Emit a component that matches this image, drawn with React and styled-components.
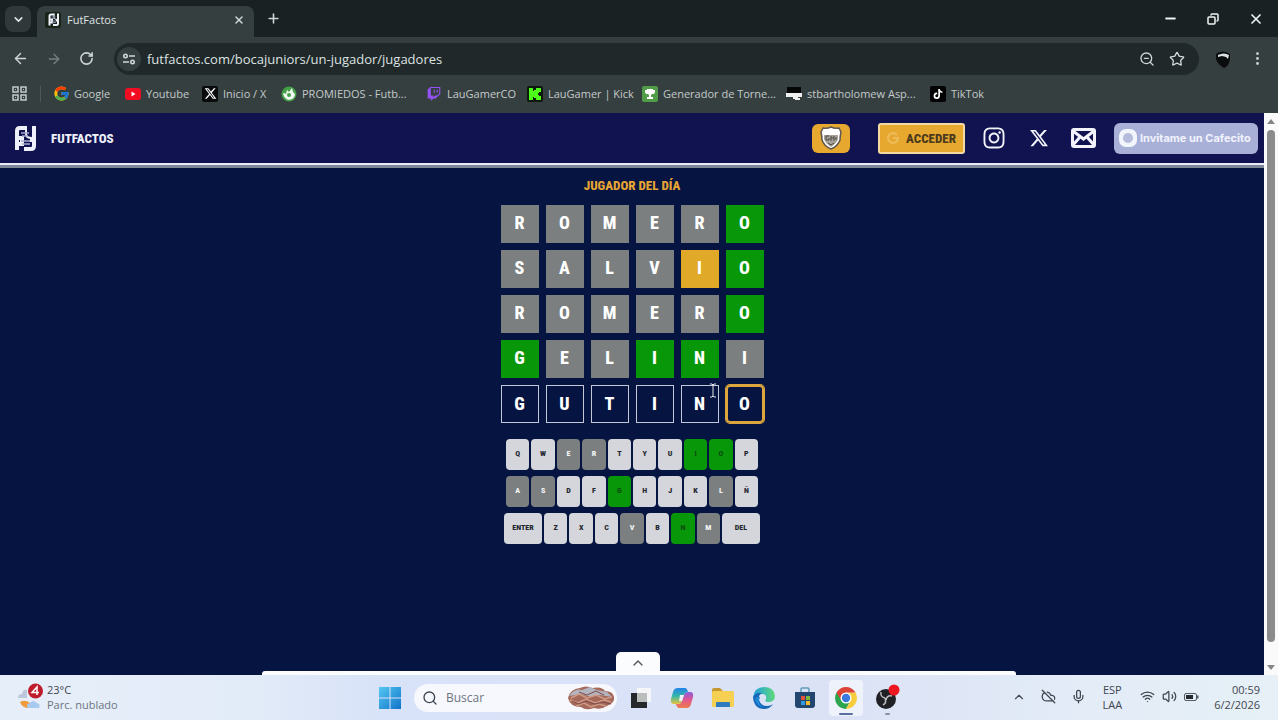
import { useState } from "react";
import styled, { createGlobalStyle, css } from "styled-components";
import {
  ArrowLeft,
  ArrowRight,
  ChevronDown,
  ChevronUp,
  CloudOff,
  Copy,
  EllipsisVertical,
  Mic,
  Minus,
  Plus,
  RotateCw,
  Search,
  Star,
  Volume2,
  Wifi,
  X,
  ZoomOut,
} from "lucide-react";
import { FcGoogle } from "react-icons/fc";
import { FaInstagram, FaTiktok, FaTwitch, FaXTwitter } from "react-icons/fa6";

const GlobalStyle = createGlobalStyle`
  * {
    box-sizing: border-box;
  }
  body {
    margin: 0;
    font-family: "Open Sans", "Noto Sans", sans-serif;
  }
  button, input {
    font-family: inherit;
    border: none;
    padding: 0;
    margin: 0;
    outline: none;
  }
  button {
    cursor: pointer;
    background: none;
    color: inherit;
  }
  a {
    color: inherit;
    text-decoration: none;
  }
  svg {
    display: block;
    flex-shrink: 0;
  }
`;

const condensed = css`
  font-family: "Roboto Condensed", "Liberation Sans Narrow", "Liberation Sans", sans-serif;
  font-weight: 800;
`;

const Screen = styled.div`
  min-height: 100vh;
  display: flex;
  flex-direction: column;
  background: #051440;
`;

/* browser */
const TitleBar = styled.div`
  height: 37px;
  display: flex;
  align-items: stretch;
  background: #1a2122;
  color: #dfe4e4;
`;
const TabSearch = styled.button`
  width: 26px;
  height: 26px;
  margin: 6px 6px 0 5px;
  display: flex;
  align-items: center;
  justify-content: center;
  border-radius: 8px;
  background: #30383a;
`;
const Tab = styled.div`
  width: 217px;
  margin-top: 6px;
  padding: 0 9px 4px 8px;
  display: flex;
  align-items: center;
  gap: 6px;
  border-radius: 8px 8px 0 0;
  background: #363f40;
  font-size: 11px;
`;
const TabName = styled.span`
  flex: 1;
`;
const IconButton = styled.button`
  display: flex;
  align-items: center;
  justify-content: center;
  color: ${(p) => p.$color || "#d0d6d6"};
`;
const NewTab = styled(IconButton)`
  width: 38px;
`;
const WindowButtons = styled.div`
  margin-left: auto;
  padding-right: 14px;
  display: flex;
  gap: 29px;
`;
const Toolbar = styled.div`
  height: 43px;
  padding: 0 12px;
  display: flex;
  align-items: center;
  gap: 17px;
  background: #363f40;
`;
const AddressBar = styled.div`
  flex: 1;
  height: 32px;
  margin-left: 3px;
  padding: 0 14px 0 3px;
  display: flex;
  align-items: center;
  gap: 6px;
  border-radius: 16px;
  background: #202829;
`;
const SiteInfo = styled(IconButton)`
  width: 24px;
  height: 24px;
  border-radius: 50%;
  background: #363f40;
`;
const UrlInput = styled.input`
  flex: 1;
  min-width: 0;
  background: none;
  color: #dde2e2;
  font-size: 13px;
`;
const UrlActions = styled.div`
  display: flex;
  gap: 14px;
`;
const ProfileButton = styled(IconButton)`
  margin-left: -2px;
`;
const Bookmarks = styled.nav`
  height: 33px;
  padding: 0 12px 6px;
  display: flex;
  align-items: center;
  background: #363f40;
  color: #c3caca;
  font-size: 11px;
`;
const Divider = styled.span`
  width: 1px;
  height: 16px;
  margin: 0 12px 0 13px;
  background: #4c5758;
`;
const Bookmark = styled.a`
  width: ${(p) => p.$width}px;
  display: flex;
  align-items: center;
  gap: 5px;
  white-space: nowrap;
`;
const Favicon = styled.span`
  width: 16px;
  height: 16px;
  display: flex;
  align-items: center;
  justify-content: center;
  flex-shrink: 0;
  border-radius: 2px;
  background: ${(p) => p.$bg || "none"};
  color: ${(p) => p.$color || "#fff"};
`;

/* page */
const Viewport = styled.div`
  flex: 1;
  position: relative;
  display: flex;
`;
const Page = styled.div`
  flex: 1;
  display: flex;
  flex-direction: column;
`;
const Scrollbar = styled.div`
  width: 14px;
  padding: 5px 0 4px;
  display: flex;
  flex-direction: column;
  align-items: center;
  gap: 5px;
  background: #fafafa;
`;
const ScrollThumb = styled.div`
  width: 8px;
  height: 512px;
  border-radius: 4px;
  background: #8b8b8b;
`;
const ScrollArrow = styled.button`
  &:last-child {
    margin-top: auto;
  }
`;
const Header = styled.header`
  height: 55px;
  padding: 0 6px 5px 12px;
  display: flex;
  align-items: center;
  background:
    linear-gradient(#e9ecf6, #e9ecf6) 0 50px / 100% 2px no-repeat,
    linear-gradient(#7d8796, #7d8796) 0 52px / 100% 3px no-repeat,
    #111350;
`;
const Brand = styled.a`
  ${condensed}
  display: flex;
  align-items: center;
  gap: 13px;
  color: #eef0fa;
  font-size: 13px;
`;
const HeaderActions = styled.div`
  margin-left: auto;
  display: flex;
  align-items: center;
`;
const ClubButton = styled.button`
  width: 38px;
  height: 29px;
  margin-right: 28px;
  display: flex;
  align-items: center;
  justify-content: center;
  border-radius: 6px;
  background: #e6a82f;
`;
const LoginButton = styled.button`
  ${condensed}
  width: 87px;
  height: 31px;
  display: flex;
  align-items: center;
  justify-content: center;
  gap: 7px;
  border: 2px solid #f3d9a2;
  border-radius: 3px;
  background: #e6a82f;
  color: #4b3a1c;
  font-size: 13px;
`;
const Social = styled.a`
  width: 45px;
  display: flex;
  justify-content: center;
  color: #f2f3fb;
`;
const Socials = styled.div`
  margin: 0 8px 0 6px;
  display: flex;
  align-items: center;
`;
const Cafecito = styled.a`
  width: 144px;
  height: 31px;
  padding-left: 4px;
  display: flex;
  align-items: center;
  gap: 2px;
  border-radius: 6px;
  background: #a9b0d8;
  color: #f1f3fc;
  font-family: Inter, sans-serif;
  font-size: 11px;
  font-weight: 700;
  white-space: nowrap;
`;
const Game = styled.main`
  flex: 1;
  padding-top: 7px;
  display: flex;
  flex-direction: column;
  align-items: center;
`;
const GameTitle = styled.h1`
  ${condensed}
  margin: 0 0 8px;
  color: #e6a534;
  font-size: 13px;
  line-height: 22px;
`;
const Board = styled.div`
  display: grid;
  gap: 7px;
`;
const BoardRow = styled.div`
  display: grid;
  grid-template-columns: repeat(6, 38px);
  gap: 7px;
`;
const tileColors = {
  miss: "#7b7f80",
  hit: "#089708",
  near: "#e0a927",
};
const tile = css`
  ${condensed}
  width: 38px;
  height: 38px;
  color: #fff;
  font-size: 18px;
  line-height: 36px;
  text-align: center;
`;
const Tile = styled.div`
  ${tile}
  background: ${(p) => tileColors[p.$state]};
`;
const TileSlot = styled.div`
  position: relative;
`;
const TileInput = styled.input`
  ${tile}
  display: block;
  padding-bottom: 2px;
  border: 1px solid #c3c8d6;
  background: none;
  line-height: 20px;
  ${(p) =>
    p.$active &&
    css`
      border: 2px solid #dda63c;
      border-radius: 4px;
      box-shadow: 0 0 0 1px #dda63c;
    `}
`;
const Pointer = styled.svg`
  position: absolute;
  right: 2px;
  top: -2px;
`;
const Keyboard = styled.div`
  margin-top: 16px;
  display: grid;
  justify-items: center;
  gap: 6px;
`;
const KeyRow = styled.div`
  width: ${(p) => (p.$wide ? 256 : 252)}px;
  display: flex;
  gap: 2px;
`;
const keyColors = {
  idle: ["#d4d6db", "#23262f"],
  miss: ["#7b7f80", "#f4f5f6"],
  hit: ["#089708", "#0b4d12"],
};
const Key = styled.button`
  ${condensed}
  flex: ${(p) => (p.$wide ? "0 0 38px" : "1")};
  height: 31px;
  padding-bottom: 2px;
  border-radius: 4px;
  background: ${(p) => keyColors[p.$state][0]};
  color: ${(p) => keyColors[p.$state][1]};
  font-size: 8px;
`;
const Drawer = styled.div`
  position: absolute;
  left: 0;
  right: 0;
  bottom: 0;
  display: flex;
  flex-direction: column;
  align-items: center;
`;
const DrawerToggle = styled.button`
  width: 44px;
  height: 19px;
  margin-right: 2px;
  padding-top: 3px;
  display: flex;
  align-items: center;
  justify-content: center;
  border-radius: 5px 5px 0 0;
  background: #fbfcfd;
  color: #555;
`;
const DrawerEdge = styled.div`
  width: 59%;
  height: 4px;
  border-radius: 3px 3px 0 0;
  background: #fbfcfd;
`;

/* taskbar */
const Taskbar = styled.footer`
  height: 45px;
  padding: 0 18px 0 17px;
  display: grid;
  grid-template-columns: 1fr auto 1fr;
  align-items: center;
  background: linear-gradient(90deg, #e6eff9 0%, #e2ebf8 20%, #d8e2f8 30%, #dbe2f6 65%, #e3ecf7 85%, #e6f0f6 100%);
  color: #3f4650;
  font-size: 11px;
  line-height: 15px;
`;
const Weather = styled.button`
  padding-bottom: 2px;
  display: flex;
  align-items: center;
  gap: 3px;
  text-align: left;
  font-size: 11px;
  line-height: 15px;
`;
const Muted = styled.div`
  color: #6d747e;
`;
const Apps = styled.div`
  display: flex;
  align-items: center;
  gap: 7px;
`;
const SearchBox = styled.label`
  width: 203px;
  height: 28px;
  padding: 0 2px 0 8px;
  display: flex;
  align-items: center;
  gap: 8px;
  border-radius: 14px;
  background: #f6f8fd;
`;
const SearchInput = styled.input`
  flex: 1;
  min-width: 0;
  background: none;
  font-size: 12px;
  &::placeholder {
    color: #6d747e;
    opacity: 1;
  }
`;
const AppButton = styled.button`
  width: 34px;
  height: 36px;
  display: flex;
  flex-direction: column;
  align-items: center;
  justify-content: center;
  position: relative;
  border-radius: 4px;
  background: ${(p) => (p.$open ? "#eef2fb" : "none")};
  &::after {
    content: "";
    display: ${(p) => (p.$mark ? "block" : "none")};
    position: absolute;
    bottom: 1px;
    width: ${(p) => p.$mark}px;
    height: 2px;
    border-radius: 1px;
    background: ${(p) => (p.$open ? "#5a6f9f" : "#8a909c")};
  }
`;
const Tray = styled.div`
  padding-bottom: 2px;
  display: flex;
  align-items: center;
  justify-content: flex-end;
  gap: 15px;
`;
const TrayGroup = styled.div`
  margin-left: 3px;
  display: flex;
  align-items: center;
  gap: 7px;
`;
const Language = styled.div`
  margin-left: 2px;
  text-align: center;
`;
const Clock = styled.div`
  text-align: right;
`;

const BrandMark = ({ size = 26 }) => (
  <svg width={size} height={size} viewBox="0 0 26 26" fill="none">
    <path d="M5 25V6q0-3 3-3h7M5 13h5v6H5" stroke="#eef0fa" strokeWidth="4" />
    <path d="M22 1v20q0 3-3 3h-7M22 15h-4" stroke="#eef0fa" strokeWidth="4" />
    <path d="M14 1v8q0 4 6 4" stroke="#eef0fa" strokeWidth="2" />
    <path d="M9 8h8M10 11h6M9 16h9M10 19h8" stroke="#a4a9cb" strokeWidth="1.500" />
  </svg>
);

const AppsIcon = () => (
  <svg width="15" height="15" viewBox="0 0 15 15" fill="none" stroke="#c3caca" strokeWidth="1.500">
    <path d="M1 1h5v5H1zM9 1h5v5H9zM1 9h5v5H1zM9 9h5v5H9z" />
    <path d="M3 3.500h1M11 3.500h1M3 11.500h1M11 11.500h1" strokeWidth="1" />
  </svg>
);

const TuneIcon = () => (
  <svg width="14" height="14" viewBox="0 0 14 14" fill="none" stroke="#d0d6d6" strokeWidth="1.600">
    <circle cx="3.500" cy="4" r="1.700" />
    <path d="M7 4h6M1 10h6" />
    <circle cx="10.500" cy="10" r="1.700" />
  </svg>
);

const ProfileIcon = () => (
  <svg width="18" height="20" viewBox="0 0 18 20">
    <path d="M2 5q6-5 14 0v5q-1 7-6 9-6-3-8-9z" fill="#0a0c0d" />
    <path d="M4 6q6-3 11 0l-1 4-2-2-4-1-4 1z" fill="#d9dede" />
  </svg>
);

const YoutubeIcon = () => (
  <svg width="16" height="12" viewBox="0 0 16 12">
    <rect width="16" height="12" rx="3" fill="#f20d23" />
    <path d="M6.500 3.500v5l4-2.500z" fill="#fff" />
  </svg>
);

const PromiedosIcon = () => (
  <svg width="16" height="16" viewBox="0 0 16 16">
    <circle cx="8" cy="8" r="7.500" fill="#43a047" />
    <path d="M2 7q2 0 3 1l1-4 2 2 3-4 1 4 2 2q0 5-6 6-5-1-6-7z" fill="#f1f7f1" />
    <circle cx="8" cy="9" r="2" fill="#43a047" />
  </svg>
);

const KickIcon = () => (
  <svg width="12" height="14" viewBox="0 0 12 14">
    <path d="M0 1h4v3h1V3h2V1h5v4h-2v1H9v2h1v1h2v4H7v-2H5v-1H4v3H0z" fill="#4dfb19" />
  </svg>
);

const TrophyIcon = () => (
  <svg width="12" height="12" viewBox="0 0 12 12">
    <path d="M3 1h6v1h2v2q0 2-3 2L7 7v2h2v2H3V9h2V7L4 6Q1 6 1 4V2h2z" fill="#fff" />
  </svg>
);

const CapIcon = () => (
  <svg width="16" height="14" viewBox="0 0 16 14">
    <rect x="1" width="14" height="6" fill="#050606" />
    <path d="M0 6h16v4h-4v1h2v2H9v-1H7v-2H0z" fill="#eef0f0" />
  </svg>
);

const ShieldIcon = () => (
  <svg width="22" height="24" viewBox="0 0 22 24">
    <path
      d="M3 2q4 1 8-1 4 2 8 1l2 4q-1 4-1 8-2 6-9 9-7-3-9-9 0-4-1-8z"
      fill="#fff"
      stroke="#5d574d"
      strokeWidth="1.500"
    />
    <path d="M4 9h14v4q-1 4-7 8-6-4-7-8z" fill="#a5a29a" />
    <path d="M9 10H6v4h3v-2M11 10v5M11 12h3M14 10v5M16 11v3M8 17l3 2 3-2" stroke="#4f4b44" fill="none" />
  </svg>
);

const MailIcon = () => (
  <svg width="25" height="20" viewBox="0 0 25 20" fill="none" stroke="currentColor" strokeWidth="3">
    <rect x="1.500" y="1.500" width="22" height="17" rx="1.500" />
    <path d="M2 3l10.500 8L23 3M2 17l7-8M23 17l-7-8" />
  </svg>
);

const CafecitoIcon = () => (
  <svg width="20" height="20" viewBox="0 0 20 20">
    <rect x="1" y="1" width="18" height="18" rx="7" fill="#f3f5fc" />
    <circle cx="10" cy="10" r="5" fill="#b5bbdb" />
  </svg>
);

const Triangle = ({ down }) => (
  <svg width="8" height="7" viewBox="0 0 8 7">
    <path d={down ? "M0 1h8L4 6z" : "M0 6h8L4 1z"} fill="#858585" />
  </svg>
);

const WeatherIcon = () => (
  <svg width="27" height="30" viewBox="0 0 27 30">
    <path d="M1 16q0-4 4-4 1-5 5-4v8z" fill="#bcc7dc" />
    <path d="M3 20q5-3 10 1l-1 5q-7 0-9-6z" fill="#f09a3e" />
    <path d="M11 26q-3-4 2-5 3-4 7 0 4 1 2 5z" fill="#a9caef" />
    <circle cx="18.500" cy="9" r="7.500" fill="#bf1d2b" />
    <path d="M20 13V5l-5 5.500h7" fill="none" stroke="#fff" strokeWidth="1.500" />
  </svg>
);

const WindowsIcon = () => (
  <svg width="22" height="22" viewBox="0 0 22 22">
    <defs>
      <linearGradient id="win" x1="0" y1="0" x2="1" y2="1">
        <stop offset="0" stopColor="#55c8f2" />
        <stop offset="1" stopColor="#1173c9" />
      </linearGradient>
    </defs>
    <path d="M0 0h10.500v10.500H0zM11.500 0H22v10.500H11.500zM0 11.500h10.500V22H0zM11.500 11.500H22V22H11.500z" fill="url(#win)" />
  </svg>
);

const SearchArt = () => (
  <svg width="48" height="26" viewBox="0 0 48 26">
    <path d="M1 13Q3 4 13 3q6-3 12 0 10-2 13 3 8 0 9 6 1 6-7 9-6 4-13 2-8 3-13-1-11 0-13-9z" fill="#a5695a" />
    <path d="M2 11Q8 3 15 5l8-3 7 3 10 2 5 5-12-2-9 2-10-3z" fill="#b3b4c0" />
    <path d="M4 13l8-4 8 4 9-3 9 4 7-2M3 15l8 3 8-4 9 4 9-3 7 2M9 21l8-3 7 4 8-3 7 2" stroke="#cf9a85" strokeWidth="1.500" fill="none" />
    <path d="M5 16l7 3 7-3 9 3 8-2 8 2M12 7l8 3 9-4 8 4" stroke="#7c4a45" fill="none" />
  </svg>
);

const TaskViewIcon = () => (
  <svg width="20" height="20" viewBox="0 0 20 20">
    <rect x="6" y="0" width="14" height="14" fill="#f5f6f7" />
    <path d="M0 5h6v9h10v6H0z" fill="#25292b" />
    <rect x="6" y="5" width="10" height="9" fill="#babfbd" />
  </svg>
);

const CopilotIcon = () => (
  <svg width="24" height="22" viewBox="0 0 24 22">
    <defs>
      <linearGradient id="copA" x1="0" y1="0" x2="0" y2="1">
        <stop offset="0" stopColor="#2482e8" />
        <stop offset="0.500" stopColor="#33b8a8" />
        <stop offset="1" stopColor="#e8c341" />
      </linearGradient>
      <linearGradient id="copB" x1="0" y1="0" x2="0" y2="1">
        <stop offset="0" stopColor="#8c5ce0" />
        <stop offset="0.500" stopColor="#e4568f" />
        <stop offset="1" stopColor="#ee7d4a" />
      </linearGradient>
    </defs>
    <path
      d="M16 21H9q-2 0-3-4h3q2 0 3-3l2-6q1-3 4-3h2q4 0 3 5l-2 7q-1 4-4 4z"
      fill="url(#copB)"
    />
    <path
      d="M8 1h7q2 0 3 4-3 0-4 3l-2 6q-1 3-4 3H4q-4 0-3-5l2-7q1-4 5-4z"
      fill="url(#copA)"
    />
    <path d="M10 8h4l-2 6H9z" fill="#eef1fb" />
  </svg>
);

const FolderIcon = () => (
  <svg width="24" height="20" viewBox="0 0 24 20">
    <path d="M1 2q0-2 2-2h6l3 3h10v6H1z" fill="#c4972f" />
    <rect x="1" y="3" width="22" height="16" rx="1.500" fill="#f5d053" />
    <path d="M5 19v-4q0-1 1-1h12q1 0 1 1v4z" fill="#2e7bbd" />
  </svg>
);

const EdgeIcon = () => (
  <svg width="24" height="24" viewBox="0 0 24 24">
    <defs>
      <linearGradient id="edgeA" x1="0" y1="0" x2="1" y2="0">
        <stop offset="0" stopColor="#1f9fe0" />
        <stop offset="1" stopColor="#5fd97b" />
      </linearGradient>
    </defs>
    <path d="M1 12Q2 1 12 1q10 0 11 9 0 6-7 6-4 0-2-3 1-5-4-5-6 0-9 4z" fill="url(#edgeA)" />
    <path d="M1 11q3-5 9-4-4 2-3 7 2 6 8 6 4 0 6-2-3 5-9 5Q2 23 1 11z" fill="#1767b8" />
    <path d="M8 11q-3 6 3 10-7-1-8-8 1-3 5-2z" fill="#1e87d5" />
  </svg>
);

const StoreIcon = () => (
  <svg width="22" height="22" viewBox="0 0 22 22">
    <path d="M7 5V2q0-1 1-1h6q1 0 1 1v3" fill="none" stroke="#5f9bb8" strokeWidth="1.500" />
    <path d="M1 5h20v13q0 3-3 3H4q-3 0-3-3z" fill="#23466f" />
    <path d="M7 9h4v4H7z" fill="#e6533c" />
    <path d="M12 9h4v4h-4z" fill="#7cb83c" />
    <path d="M7 14h4v4H7z" fill="#2f9de0" />
    <path d="M12 14h4v4h-4z" fill="#f4bc31" />
  </svg>
);

const ChromeIcon = () => (
  <svg width="22" height="22" viewBox="0 0 22 22">
    <path d="M1.500 5.500A11 11 0 0 0 11 22L15.500 13.500 11 11z" fill="#2da44e" />
    <path d="M20.500 5.500A11 11 0 0 1 11 22L15.500 13.500 11 5.500z" fill="#f8cd3c" />
    <path d="M1.500 5.500A11 11 0 0 1 20.500 5.500H11L6 13z" fill="#dc4437" />
    <circle cx="11" cy="11" r="5.500" fill="#fff" />
    <circle cx="11" cy="11" r="4.200" fill="#3c79dc" />
  </svg>
);

const ObsIcon = () => (
  <svg width="28" height="28" viewBox="0 0 28 28">
    <circle cx="13" cy="15" r="10" fill="#202124" />
    <path d="M8 8q-1 5 4 6M19 12q-5-1-6 4M10 21q4-2 2-7" stroke="#b9bbbf" strokeWidth="1.500" fill="none" />
    <circle cx="21" cy="6" r="5.500" fill="#ee1620" />
  </svg>
);

const BatteryIcon = () => (
  <svg width="15" height="10" viewBox="0 0 15 10">
    <rect x="0.500" y="1.500" width="12" height="7" rx="1.500" fill="none" stroke="#555c66" />
    <rect x="2" y="3" width="7" height="4" fill="#252a31" />
    <rect x="13" y="3.500" width="1.500" height="3" fill="#555c66" />
  </svg>
);

const bookmarks = [
  { name: "Google", width: 72, icon: <FcGoogle size={17} /> },
  { name: "Youtube", width: 77, icon: <YoutubeIcon /> },
  { name: "Inicio / X", width: 79, bg: "#090a0b", icon: <FaXTwitter size={13} /> },
  { name: "PROMIEDOS - Futb...", width: 145, icon: <PromiedosIcon /> },
  { name: "LauGamerCO", width: 101, color: "#9551f5", icon: <FaTwitch size={14} /> },
  { name: "LauGamer | Kick", width: 115, bg: "#0b1a0c", icon: <KickIcon /> },
  { name: "Generador de Torne...", width: 144, bg: "#519c46", icon: <TrophyIcon /> },
  { name: "stbartholomew Asp...", width: 144, icon: <CapIcon /> },
  { name: "TikTok", width: 60, bg: "#030304", icon: <FaTiktok size={10} /> },
];

// m = miss, h = hit, n = near, i = idle
const states = { m: "miss", h: "hit", n: "near", i: "idle" };
const guesses = [
  ["ROMERO", "mmmmmh"],
  ["SALVIO", "mmmmnh"],
  ["ROMERO", "mmmmmh"],
  ["GELINI", "hmmhhm"],
];
const keyRows = [
  [["Q", "W", "E", "R", "T", "Y", "U", "I", "O", "P"], "iimmiiihhi"],
  [["A", "S", "D", "F", "G", "H", "J", "K", "L", "Ñ"], "mmiihiiimi"],
  [["ENTER", "Z", "X", "C", "V", "B", "N", "M", "DEL"], "iiiimihmi"],
];

const Browser = () => {
  const [url, setUrl] = useState("futfactos.com/bocajuniors/un-jugador/jugadores");
  return (
    <>
      <TitleBar>
        <TabSearch aria-label="Buscar pestañas">
          <ChevronDown size={13} strokeWidth={3} />
        </TabSearch>
        <Tab>
          <Favicon $bg="#172518">
            <BrandMark size={13} />
          </Favicon>
          <TabName>FutFactos</TabName>
          <IconButton aria-label="Cerrar pestaña">
            <X size={12} strokeWidth={3} />
          </IconButton>
        </Tab>
        <NewTab aria-label="Nueva pestaña">
          <Plus size={15} strokeWidth={2.5} />
        </NewTab>
        <WindowButtons>
          <IconButton aria-label="Minimizar" $color="#f0f3f3">
            <Minus size={15} strokeWidth={3} />
          </IconButton>
          <IconButton aria-label="Restaurar" $color="#f0f3f3">
            <Copy size={12} strokeWidth={3} transform="scale(-1 1)" />
          </IconButton>
          <IconButton aria-label="Cerrar" $color="#f0f3f3">
            <X size={16} strokeWidth={2.5} />
          </IconButton>
        </WindowButtons>
      </TitleBar>
      <Toolbar>
        <IconButton aria-label="Atrás">
          <ArrowLeft size={17} />
        </IconButton>
        <IconButton aria-label="Adelante" $color="#758081">
          <ArrowRight size={16} />
        </IconButton>
        <IconButton aria-label="Recargar">
          <RotateCw size={15} strokeWidth={2.5} />
        </IconButton>
        <AddressBar>
          <SiteInfo aria-label="Información del sitio">
            <TuneIcon />
          </SiteInfo>
          <UrlInput aria-label="Dirección" value={url} onChange={(e) => setUrl(e.target.value)} />
          <UrlActions>
            <IconButton aria-label="Zoom">
              <ZoomOut size={16} />
            </IconButton>
            <IconButton aria-label="Favorito">
              <Star size={16} />
            </IconButton>
          </UrlActions>
        </AddressBar>
        <ProfileButton aria-label="Perfil">
          <ProfileIcon />
        </ProfileButton>
        <IconButton aria-label="Menú">
          <EllipsisVertical size={17} />
        </IconButton>
      </Toolbar>
      <Bookmarks>
        <AppsIcon />
        <Divider />
        {bookmarks.map((b) => (
          <Bookmark key={b.name} href="#" $width={b.width}>
            <Favicon $bg={b.bg} $color={b.color}>
              {b.icon}
            </Favicon>
            {b.name}
          </Bookmark>
        ))}
      </Bookmarks>
    </>
  );
};

const Wordle = () => {
  const [word, setWord] = useState("GUTINO".split(""));
  const change = (i, value) => setWord(word.map((l, n) => (n === i ? value.toUpperCase() : l)));
  return (
    <Game>
      <GameTitle>JUGADOR DEL DÍA</GameTitle>
      <Board>
        {guesses.map(([letters, marks], r) => (
          <BoardRow key={r}>
            {letters.split("").map((l, i) => (
              <Tile key={i} $state={states[marks[i]]}>
                {l}
              </Tile>
            ))}
          </BoardRow>
        ))}
        <BoardRow>
          {word.map((l, i) => (
            <TileSlot key={i}>
              <TileInput
                aria-label={`Letra ${i + 1}`}
                maxLength={1}
                value={l}
                $active={i === 5}
                onChange={(e) => change(i, e.target.value)}
              />
              {i === 4 && (
                <Pointer width="8" height="15" viewBox="0 0 8 15">
                  <path d="M1 1h2l1 1 1-1h2M4 2v11M1 14h2l1-1 1 1h2" stroke="#e4e6ec" fill="none" />
                </Pointer>
              )}
            </TileSlot>
          ))}
        </BoardRow>
      </Board>
      <Keyboard>
        {keyRows.map(([keys, marks], r) => (
          <KeyRow key={r} $wide={r === 2}>
            {keys.map((k, i) => (
              <Key key={k} $wide={k.length > 1} $state={states[marks[i]]}>
                {k}
              </Key>
            ))}
          </KeyRow>
        ))}
      </Keyboard>
    </Game>
  );
};

const Desktop = () => (
  <Taskbar>
    <Weather>
      <WeatherIcon />
      <div>
        <div>23°C</div>
        <Muted>Parc. nublado</Muted>
      </div>
    </Weather>
    <Apps>
      <AppButton aria-label="Inicio">
        <WindowsIcon />
      </AppButton>
      <SearchBox>
        <Search size={16} />
        <SearchInput placeholder="Buscar" aria-label="Buscar" />
        <SearchArt />
      </SearchBox>
      <AppButton aria-label="Vista de tareas">
        <TaskViewIcon />
      </AppButton>
      <AppButton aria-label="Copilot">
        <CopilotIcon />
      </AppButton>
      <AppButton aria-label="Explorador">
        <FolderIcon />
      </AppButton>
      <AppButton aria-label="Edge">
        <EdgeIcon />
      </AppButton>
      <AppButton aria-label="Store">
        <StoreIcon />
      </AppButton>
      <AppButton aria-label="Chrome" $open $mark={14}>
        <ChromeIcon />
      </AppButton>
      <AppButton aria-label="OBS" $mark={5}>
        <ObsIcon />
      </AppButton>
    </Apps>
    <Tray>
      <ChevronUp size={14} />
      <CloudOff size={15} />
      <Mic size={15} />
      <Language>
        <div>ESP</div>
        <div>LAA</div>
      </Language>
      <TrayGroup>
        <Wifi size={15} />
        <Volume2 size={15} />
        <BatteryIcon />
      </TrayGroup>
      <Clock>
        <div>00:59</div>
        <div>6/2/2026</div>
      </Clock>
    </Tray>
  </Taskbar>
);

const App = () => (
  <Screen>
    <GlobalStyle />
    <Browser />
    <Viewport>
      <Page>
        <Header>
          <Brand href="#">
            <BrandMark />
            FUTFACTOS
          </Brand>
          <HeaderActions>
            <ClubButton aria-label="Club">
              <ShieldIcon />
            </ClubButton>
            <LoginButton>
              <svg width="12" height="12" viewBox="0 0 12 12" fill="none" stroke="#efbc5a" strokeWidth="2">
                <path d="M10 3a5 5 0 1 0 1 3H6" />
              </svg>
              ACCEDER
            </LoginButton>
            <Socials>
              <Social href="#" aria-label="Instagram">
                <FaInstagram size={24} />
              </Social>
              <Social href="#" aria-label="X">
                <FaXTwitter size={20} />
              </Social>
              <Social href="#" aria-label="Correo">
                <MailIcon />
              </Social>
            </Socials>
            <Cafecito href="#">
              <CafecitoIcon />
              Invitame un Cafecito
            </Cafecito>
          </HeaderActions>
        </Header>
        <Wordle />
      </Page>
      <Scrollbar>
        <ScrollArrow aria-label="Subir">
          <Triangle />
        </ScrollArrow>
        <ScrollThumb />
        <ScrollArrow aria-label="Bajar">
          <Triangle down />
        </ScrollArrow>
      </Scrollbar>
      <Drawer>
        <DrawerToggle aria-label="Abrir">
          <ChevronUp size={16} />
        </DrawerToggle>
        <DrawerEdge />
      </Drawer>
    </Viewport>
    <Desktop />
  </Screen>
);

export default App;
